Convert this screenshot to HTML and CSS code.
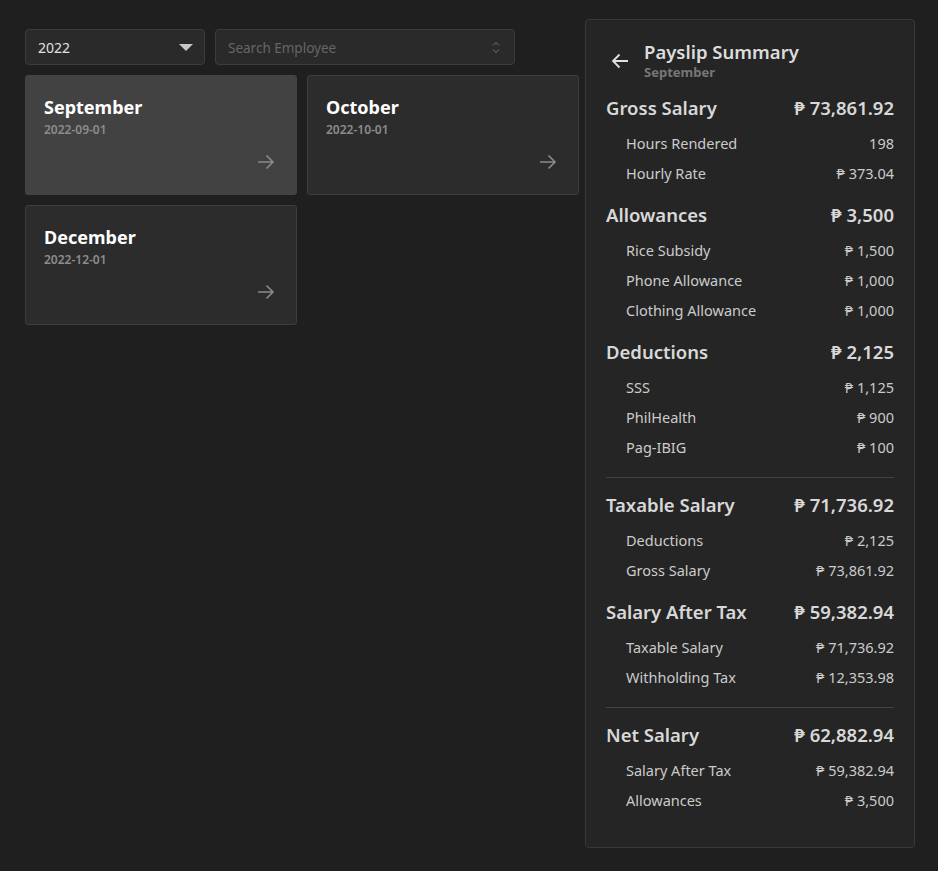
FILE: index.html
```html
<!DOCTYPE html>
<html>
<head>
<meta charset="utf-8">
<link rel="stylesheet" href="styles.css">
</head>
<body>
<div class="page">
  <div class="left">
    <div class="toolbar">
      <div class="select">
        <span>2022</span>
        <svg class="caret" width="14" height="8" viewBox="0 0 14 8"><path d="M0 0h14L7 7z" fill="#c8c8c8"/></svg>
      </div>
      <div class="search">
        <span>Search Employee</span>
        <svg class="updown" width="8" height="13" viewBox="0 0 8 13"><path d="M1 4.5L4 1.5L7 4.5M1 8.5L4 11.5L7 8.5" fill="none" stroke="#777" stroke-width="1"/></svg>
      </div>
    </div>
    <div class="grid">
      <div class="card active">
        <div class="card-title">September</div>
        <div class="card-date">2022-09-01</div>
        <svg class="card-arrow" width="18" height="16" viewBox="0 0 18 16"><path d="M1 8H16M9.5 1.5L16 8L9.5 14.5" fill="none" stroke="#8a8a8a" stroke-width="1.6"/></svg>
      </div>
      <div class="card">
        <div class="card-title">October</div>
        <div class="card-date">2022-10-01</div>
        <svg class="card-arrow" width="18" height="16" viewBox="0 0 18 16"><path d="M1 8H16M9.5 1.5L16 8L9.5 14.5" fill="none" stroke="#8a8a8a" stroke-width="1.6"/></svg>
      </div>
      <div class="card">
        <div class="card-title">December</div>
        <div class="card-date">2022-12-01</div>
        <svg class="card-arrow" width="18" height="16" viewBox="0 0 18 16"><path d="M1 8H16M9.5 1.5L16 8L9.5 14.5" fill="none" stroke="#8a8a8a" stroke-width="1.6"/></svg>
      </div>
    </div>
  </div>
  <div class="panel">
    <div class="panel-head">
      <svg class="back" width="18" height="16" viewBox="0 0 18 16"><path d="M17 8H2M8.5 1.5L2 8L8.5 14.5" fill="none" stroke="#e0e0e0" stroke-width="1.8"/></svg>
      <div>
        <div class="panel-title">Payslip Summary</div>
        <div class="panel-sub">September</div>
      </div>
    </div>

    <div class="section">
      <div class="sec-head"><span>Gross Salary</span><span>₱ 73,861.92</span></div>
      <div class="row"><span>Hours Rendered</span><span>198</span></div>
      <div class="row"><span>Hourly Rate</span><span>₱ 373.04</span></div>
    </div>
    <div class="section">
      <div class="sec-head"><span>Allowances</span><span>₱ 3,500</span></div>
      <div class="row"><span>Rice Subsidy</span><span>₱ 1,500</span></div>
      <div class="row"><span>Phone Allowance</span><span>₱ 1,000</span></div>
      <div class="row"><span>Clothing Allowance</span><span>₱ 1,000</span></div>
    </div>
    <div class="section">
      <div class="sec-head"><span>Deductions</span><span>₱ 2,125</span></div>
      <div class="row"><span>SSS</span><span>₱ 1,125</span></div>
      <div class="row"><span>PhilHealth</span><span>₱ 900</span></div>
      <div class="row"><span>Pag-IBIG</span><span>₱ 100</span></div>
    </div>
    <div class="divider"></div>
    <div class="section">
      <div class="sec-head"><span>Taxable Salary</span><span>₱ 71,736.92</span></div>
      <div class="row"><span>Deductions</span><span>₱ 2,125</span></div>
      <div class="row"><span>Gross Salary</span><span>₱ 73,861.92</span></div>
    </div>
    <div class="section">
      <div class="sec-head"><span>Salary After Tax</span><span>₱ 59,382.94</span></div>
      <div class="row"><span>Taxable Salary</span><span>₱ 71,736.92</span></div>
      <div class="row"><span>Withholding Tax</span><span>₱ 12,353.98</span></div>
    </div>
    <div class="divider"></div>
    <div class="section">
      <div class="sec-head"><span>Net Salary</span><span>₱ 62,882.94</span></div>
      <div class="row"><span>Salary After Tax</span><span>₱ 59,382.94</span></div>
      <div class="row"><span>Allowances</span><span>₱ 3,500</span></div>
    </div>
  </div>
</div>
</body>
</html>
```
FILE: styles.css
```css
* { box-sizing: border-box; }
html, body {
  margin: 0;
  background: #1f1f1f;
  font-family: "Noto Sans", "Open Sans", sans-serif;
  color: #d6d6d6;
}
.page {
  display: flex;
  align-items: flex-start;
  gap: 6px;
  padding: 19px 0 0 25px;
}
.left {
  width: 554px;
  padding-top: 10px;
}
.toolbar {
  display: flex;
  gap: 10px;
}
.select, .search {
  height: 36px;
  background: #2a2a2a;
  border: 1px solid #3c3c3c;
  border-radius: 4px;
  display: flex;
  align-items: center;
  justify-content: space-between;
  font-size: 14px;
}
.select {
  width: 180px;
  padding: 0 11px 0 12px;
  color: #e0e0e0;
}
.caret { margin-top: 1px; }
.search {
  width: 300px;
  padding: 1px 14px 0 12px;
  color: #666;
  font-size: 13.5px;
}
.grid {
  margin-top: 10px;
  display: grid;
  grid-template-columns: 272px 272px;
  gap: 10px;
}
.card {
  height: 120px;
  background: #2c2c2c;
  border: 1px solid #3d3d3d;
  border-radius: 3px;
  padding: 18px 18px 0 18px;
  display: flex;
  flex-direction: column;
}
.card.active {
  background: #424242;
  border-color: #444;
}
.card-title {
  font-size: 18px;
  font-weight: 700;
  line-height: 26px;
  color: #fff;
}
.card-date {
  font-size: 12px;
  font-weight: 600;
  line-height: 16px;
  margin-top: 2px;
  color: #8c8c8c;
}
.card-arrow {
  align-self: flex-end;
  margin-top: 16px;
  margin-right: 3px;
}
.panel {
  width: 330px;
  height: 829px;
  background: #252525;
  border: 1px solid #3a3a3a;
  border-radius: 4px;
  padding: 19px 20px 0 20px;
}
.panel-head {
  display: flex;
  align-items: center;
  gap: 15px;
  padding-left: 5px;
  margin-bottom: 13px;
}
.back { margin-top: 2px; }
.panel-title {
  font-size: 18.5px;
  font-weight: 600;
  line-height: 25px;
  color: #dcdcdc;
}
.panel-sub {
  font-size: 13px;
  font-weight: 700;
  line-height: 16px;
  color: #777;
}
.section {
  margin-bottom: 12px;
}
.sec-head {
  display: flex;
  justify-content: space-between;
  align-items: center;
  height: 28px;
  font-size: 18.5px;
  font-weight: 600;
  color: #d8d8d8;
  margin-bottom: 7px;
}
.row {
  display: flex;
  justify-content: space-between;
  align-items: center;
  height: 30px;
  padding-left: 20px;
  font-size: 14.5px;
  color: #cbcbcb;
}
.divider {
  height: 1px;
  background: #444;
  margin: 15px 0 12px 0;
}
```
